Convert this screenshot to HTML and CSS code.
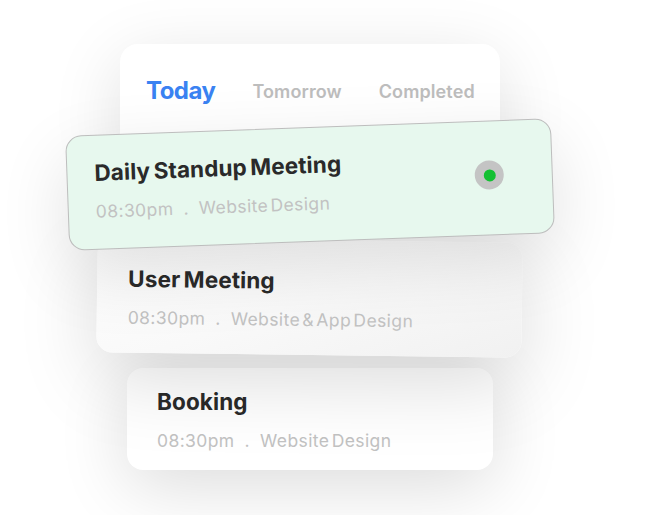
FILE: index.html
```html
<!DOCTYPE html>
<html>
<head>
<meta charset="utf-8">
<link rel="stylesheet" href="styles.css">
</head>
<body>
<div class="stage">
  <div class="tabs-card">
    <span class="tab active">Today</span>
    <span class="tab">Tomorrow</span>
    <span class="tab">Completed</span>
  </div>
  <div class="task task-green">
    <div class="task-text">
      <div class="task-title">Daily Standup Meeting</div>
      <div class="task-meta"><span>08:30pm</span><span class="dot">.</span><span>Website Design</span></div>
    </div>
    <div class="status"><span class="status-inner"></span></div>
  </div>
  <div class="task task-user">
    <div class="task-text">
      <div class="task-title">User Meeting</div>
      <div class="task-meta"><span>08:30pm</span><span class="dot">.</span><span>Website &amp; App Design</span></div>
    </div>
  </div>
  <div class="task task-booking">
    <div class="task-text">
      <div class="task-title">Booking</div>
      <div class="task-meta"><span>08:30pm</span><span class="dot">.</span><span>Website Design</span></div>
    </div>
  </div>
</div>
</body>
</html>
```
FILE: styles.css
```css
* { box-sizing: border-box; }
html, body {
  margin: 0;
  padding: 0;
  background: #ffffff;
  width: 652px;
  height: 515px;
  overflow: hidden;
  font-family: "Inter", "Noto Sans", sans-serif;
}
.stage {
  display: flex;
  flex-direction: column;
  align-items: flex-start;
  padding-top: 44px;
}
.tabs-card {
  margin-left: 120px;
  width: 380px;
  height: 110px;
  background: #ffffff;
  border-radius: 18px;
  box-shadow: 0 16px 70px rgba(0, 0, 0, 0.12);
  display: flex;
  align-items: flex-start;
  padding: 33px 0 0 26px;
}
.tab {
  font-weight: 600;
  font-size: 18px;
  color: #bdbdbd;
  letter-spacing: 0.1px;
  line-height: 28px;
  margin-top: 1px;
}
.tab.active {
  font-weight: 700;
  font-size: 24px;
  color: #3a82f2;
  letter-spacing: -0.5px;
  margin-top: 0;
  margin-right: 37px;
}
.tab:nth-child(2) { margin-right: 37px; }

.task {
  display: flex;
  align-items: center;
  justify-content: space-between;
  border-radius: 16px;
}
.task-text { padding-top: 2px; }
.task-title {
  font-weight: 700;
  font-size: 22.5px;
  color: #2a2a2a;
  letter-spacing: 0.1px;
  word-spacing: -2px;
  line-height: 28px;
}
.task-meta {
  margin-top: 14px;
  font-size: 17.5px;
  color: #c2c2c2;
  letter-spacing: 0.4px;
  word-spacing: -3px;
  line-height: 22px;
  display: flex;
}
.task-meta .dot { margin: 0 10px; }

.task-green {
  margin-left: 67px;
  margin-top: -27px;
  width: 486px;
  height: 115px;
  background: #e7f8ee;
  border: 1px solid #bdbdbd;
  transform: rotate(-2.1deg);
  padding: 0 48px 6px 27px;
  box-shadow: 0 24px 70px rgba(0, 0, 0, 0.12);
  position: relative;
  z-index: 3;
}
.status {
  width: 29px;
  height: 29px;
  border-radius: 50%;
  background: #c4c4c4;
  display: flex;
  align-items: center;
  justify-content: center;
}
.status-inner {
  width: 12px;
  height: 12px;
  border-radius: 50%;
  background: #13c032;
}

.task-user {
  margin-left: 97px;
  margin-top: -2px;
  width: 425px;
  height: 115px;
  background: linear-gradient(160deg, #ffffff 0%, #f9f9f9 50%, #f1f1f1 100%);
  transform: rotate(0.7deg);
  padding: 0 30px 0 31px;
  box-shadow: 0 24px 80px rgba(0, 0, 0, 0.15);
  position: relative;
  z-index: 2;
}
.task-booking {
  margin-left: 127px;
  margin-top: 13px;
  width: 366px;
  height: 102px;
  background: #ffffff;
  padding: 0 30px 0 30px;
  box-shadow: 0 16px 70px rgba(0, 0, 0, 0.14);
  position: relative;
  z-index: 1;
}
```
